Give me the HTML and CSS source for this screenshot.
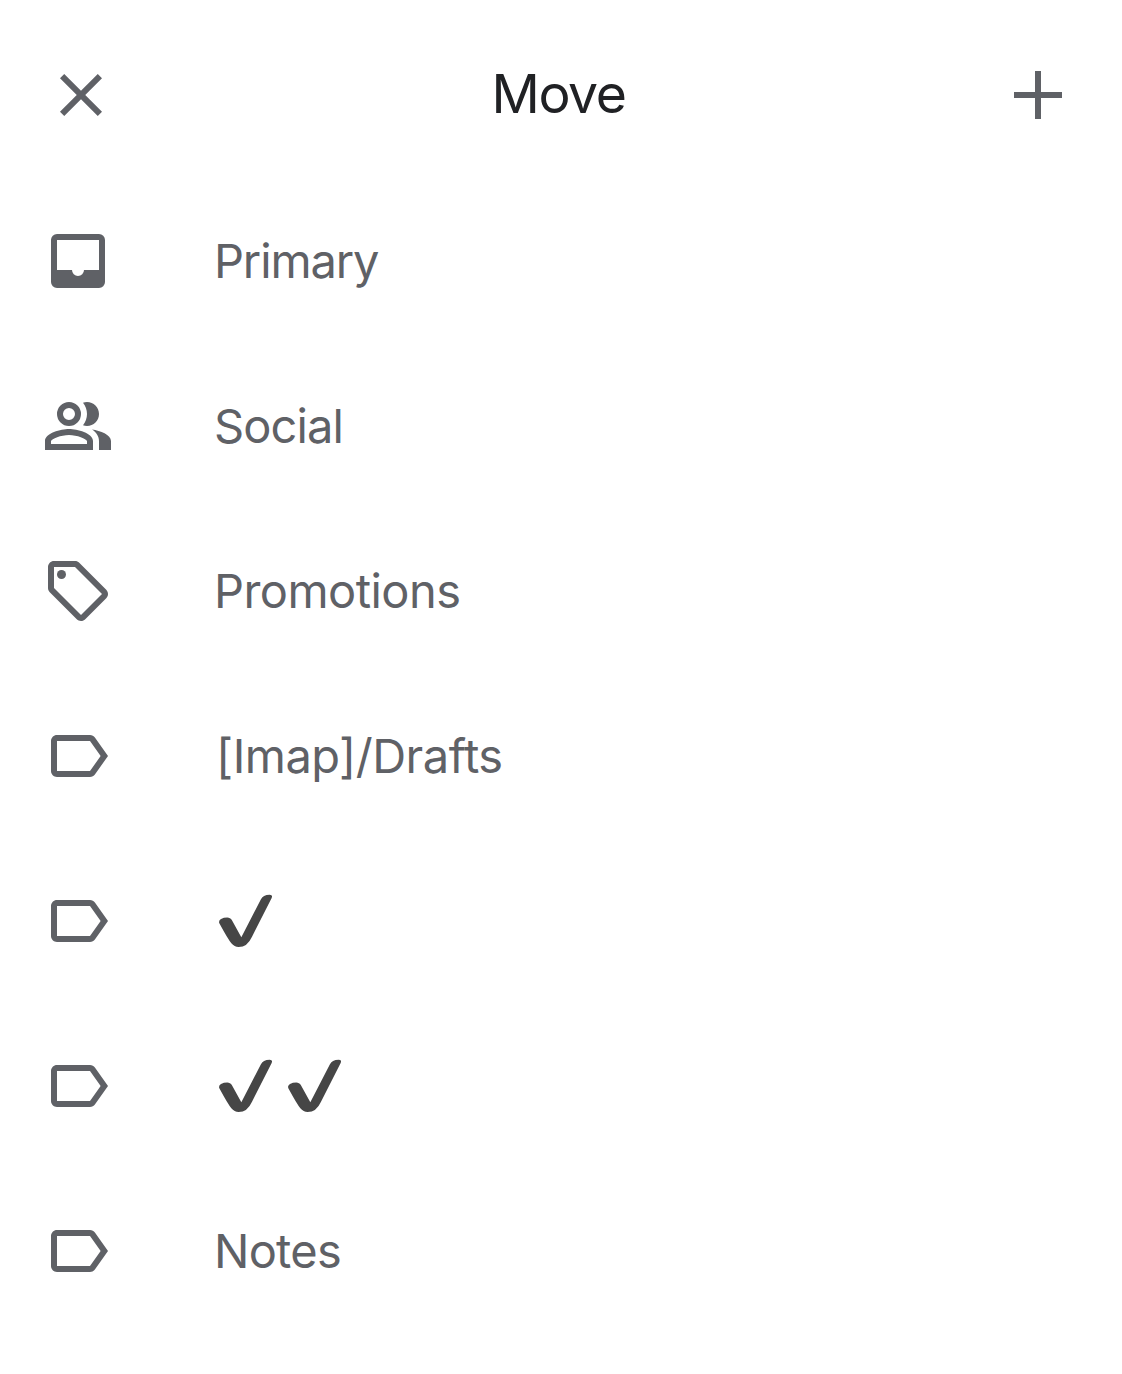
FILE: index.html
```html
<!DOCTYPE html>
<html lang="en">
<head>
<meta charset="utf-8">
<title>Move</title>
<link rel="stylesheet" href="styles.css">
</head>
<body>
<svg class="symbols" width="0" height="0" aria-hidden="true">
  <symbol id="label" viewBox="0 0 24 24"><path d="M17.63 5.84C17.27 5.33 16.67 5 16 5L5 5.01C3.9 5.01 3 5.9 3 7v10c0 1.1.9 1.99 2 1.99L16 19c.67 0 1.27-.33 1.63-.84L22 12l-4.37-6.16zM16 17H5V7h11l3.55 5L16 17z"/></symbol>
  <symbol id="check" viewBox="36 33 207 180"><path d="M58 130Q55 122 63 117Q73 112 86 113Q92 114 95 119L124 172L182 59Q189 44 209 44Q219 44 215 54L156 170Q142 201 116 201Q103 201 94 190Q84 178 58 130Z"/></symbol>
</svg>
<header class="bar">
  <button class="action" aria-label="Close"><svg viewBox="0 0 24 24"><path d="M19 6.41L17.59 5 12 10.59 6.41 5 5 6.41 10.59 12 5 17.59 6.41 19 12 13.41 17.59 19 19 17.59 13.41 12z"/></svg></button>
  <h1 class="title">Move</h1>
  <button class="action" aria-label="Add label"><svg viewBox="0 0 24 24"><path d="M11 4h2v7h7v2h-7v7h-2v-7H4v-2h7z"/></svg></button>
</header>
<ul class="list">
  <li class="row"><svg class="icon" viewBox="0 0 24 24"><path fill-rule="evenodd" d="M5 3h14a2 2 0 0 1 2 2v14a2 2 0 0 1-2 2H5a2 2 0 0 1-2-2V5a2 2 0 0 1 2-2zm0 2v10h5a2 2 0 0 0 4 0h5V5z"/></svg><span class="name primary">Primary</span></li>
  <li class="row"><svg class="icon" viewBox="0 0 24 24"><path fill-rule="evenodd" d="M9 4a4 4 0 1 0 0 8 4 4 0 0 0 0-8zm0 2a2 2 0 1 1 0 4 2 2 0 0 1 0-4z"/><path fill-rule="evenodd" d="M9 13c-2.67 0-8 1.34-8 4v3h16v-3c0-2.66-5.33-4-8-4zm6 5H3v-.99C3.2 16.29 6.3 15 9 15s5.8 1.29 6 2v1z"/><path d="M16.67 13.13C18.04 14.06 19 15.32 19 17v3h4v-3c0-2.18-3.57-3.47-6.33-3.87zM15 12c2.21 0 4-1.79 4-4s-1.79-4-4-4c-.47 0-.91.1-1.33.24C14.5 5.27 15 6.58 15 8s-.5 2.73-1.33 3.76c.42.14.86.24 1.33.24z"/></svg><span class="name social">Social</span></li>
  <li class="row"><svg class="icon" viewBox="0 0 24 24"><path d="M21.41 11.58l-9-9C12.05 2.22 11.55 2 11 2H4c-1.1 0-2 .9-2 2v7c0 .55.22 1.05.59 1.42l9 9c.36.36.86.58 1.41.58s1.05-.22 1.41-.59l7-7c.37-.36.59-.86.59-1.41s-.23-1.06-.59-1.42zM13 20.01L4 11V4h7v-.01l9 9-7 7.02z"/><circle cx="6.5" cy="6.5" r="1.5"/></svg><span class="name promotions">Promotions</span></li>
  <li class="row"><svg class="icon"><use href="#label"/></svg><span class="name drafts">[Imap]/Drafts</span></li>
  <li class="row"><svg class="icon"><use href="#label"/></svg><span class="checks"><svg class="check" role="img" aria-label="Check"><use href="#check"/></svg></span></li>
  <li class="row"><svg class="icon"><use href="#label"/></svg><span class="checks"><svg class="check" role="img" aria-label="Check"><use href="#check"/></svg><svg class="check" role="img" aria-label="Check"><use href="#check"/></svg></span></li>
  <li class="row"><svg class="icon"><use href="#label"/></svg><span class="name notes">Notes</span></li>
</ul>
</body>
</html>
```
FILE: styles.css
```css
* { box-sizing: border-box; }
body {
  margin: 0;
  min-height: 1374px;
  background: #fff;
  color: #5f6166;
  font-family: Inter, "Liberation Sans", sans-serif;
  overflow: hidden;
}
.symbols { display: block; }
.bar {
  display: flex;
  align-items: center;
  justify-content: space-between;
  height: 178.5px;
  padding: 11.5px 48px 0 45px;
}
.action {
  width: 72px;
  height: 72px;
  padding: 0;
  border: 0;
  background: none;
}
.action svg { display: block; width: 72px; height: 72px; fill: #5f6166; }
.title {
  margin: 0 2px 3px 0;
  font-size: 53.5px;
  font-weight: 400;
  line-height: 72px;
  letter-spacing: -1.4px;
  color: #202124;
}
.list { margin: 0; padding: 0; list-style: none; }
.row {
  display: flex;
  align-items: center;
  gap: 98px;
  height: 165px;
  padding-left: 42px;
}
.icon { flex: none; width: 72px; height: 72px; fill: #5f6166; }
.name { padding-left: 2px; font-size: 47px; line-height: 60px; white-space: nowrap; }
.primary { letter-spacing: -1.15px; }
.social { letter-spacing: -0.9px; }
.promotions { letter-spacing: -0.55px; }
.drafts { padding-left: 4px; letter-spacing: -0.5px; }
.notes { letter-spacing: -0.75px; }
.checks { display: flex; }
.check { width: 69px; height: 60px; fill: #464646; }
```
